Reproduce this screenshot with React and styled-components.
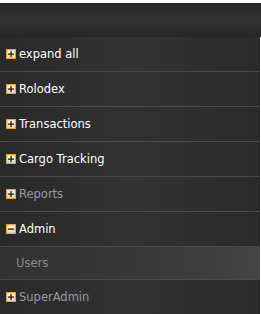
import styled, { createGlobalStyle } from "styled-components";

const GlobalStyle = createGlobalStyle`
  body {
    margin: 0;
    background: #ffffff;
    font-family: "DejaVu Sans", Verdana, sans-serif;
  }
`;

const items = [
  { label: "expand all", open: false, dim: false },
  { label: "Rolodex", open: false, dim: false },
  { label: "Transactions", open: false, dim: false },
  { label: "Cargo Tracking", open: false, dim: false },
  { label: "Reports", open: false, dim: true },
  { label: "Admin", open: true, dim: false, children: ["Users"] },
  { label: "SuperAdmin", open: false, dim: true },
];

const ToggleIcon = ({ open }) => (
  <svg width="10" height="10" viewBox="0 0 10 10">
    <defs>
      <linearGradient id="tg" x1="0" y1="0" x2="0" y2="1">
        <stop offset="0" stopColor="#ffffff" />
        <stop offset="1" stopColor="#d8d8d8" />
      </linearGradient>
    </defs>
    <rect x="0.5" y="0.5" width="9" height="9" fill="url(#tg)" stroke="#f3a02c" />
    <rect x="1.5" y="1.5" width="7" height="7" fill="none" stroke="#fbd08a" strokeWidth="0.6" />
    <rect x="2" y="4.5" width="6" height="1.2" fill="#111" />
    {!open && <rect x="4.4" y="2" width="1.2" height="6" fill="#111" />}
  </svg>
);

const App = () => {
  return (
    <>
      <GlobalStyle />
      <Page>
        <Header />
        <Menu>
          {items.map((item) => (
            <li key={item.label}>
              <Row>
                <ToggleIcon open={item.open} />
                <Label $dim={item.dim}>{item.label}</Label>
              </Row>
              {item.open &&
                item.children.map((child) => (
                  <SubRow key={child}>{child}</SubRow>
                ))}
            </li>
          ))}
        </Menu>
      </Page>
    </>
  );
};

const Page = styled.div`
  padding-top: 3px;
  height: 311px;
  overflow: hidden;
`;

const Header = styled.div`
  height: 34px;
  width: 261px;
  background: linear-gradient(to bottom, #2a2a2a 0%, #333333 55%, #262626 100%);
`;

const Menu = styled.ul`
  list-style: none;
  margin: 0;
  padding: 0;
  width: 260px;
`;

const Row = styled.div`
  display: flex;
  align-items: center;
  gap: 3px;
  height: 34px;
  padding-left: 6px;
  border-bottom: 1px solid #4a4a4a;
  background: linear-gradient(to right, #292929 0%, #323232 50%, #2a2a2a 100%);
`;

const Label = styled.span`
  font-size: 11.5px;
  color: ${(p) => (p.$dim ? "#9a9a9a" : "#ffffff")};
  line-height: 1;
  padding-top: 2px;
`;

const SubRow = styled.div`
  display: flex;
  align-items: center;
  height: 32px;
  padding-left: 16px;
  font-size: 11.5px;
  color: #8c8c8c;
  border-bottom: 1px solid #4a4a4a;
  background: linear-gradient(to right, #313131 0%, #393939 60%, #444444 100%);
`;

export default App;
